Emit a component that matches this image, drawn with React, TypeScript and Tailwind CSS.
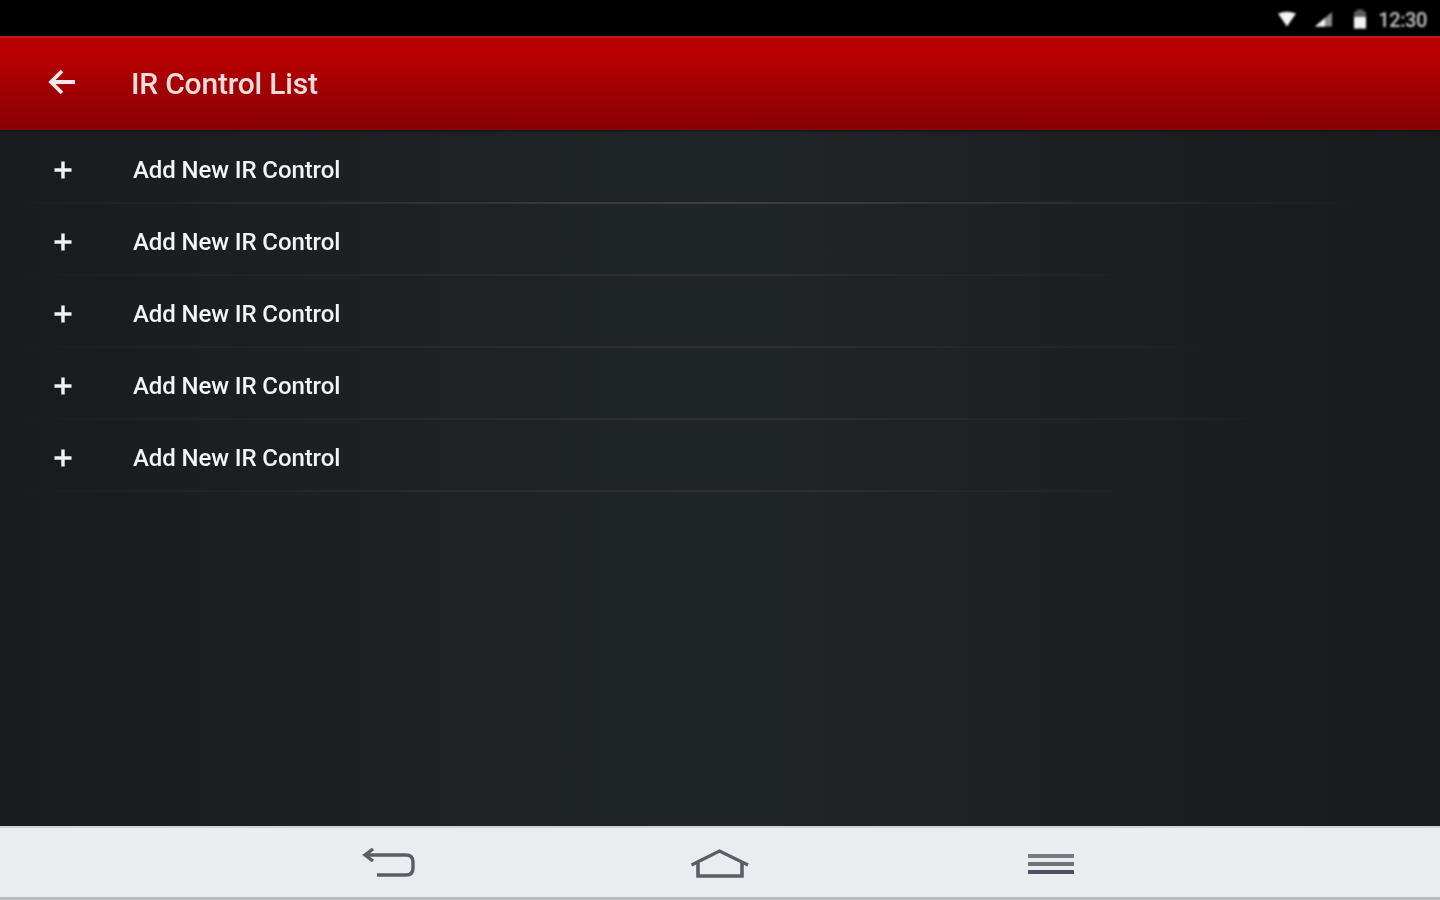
const rows = [
  "via-[#3c3f41] to-95%",
  "via-[#2d3032] to-80%",
  "via-[#2d3032] to-85%",
  "via-[#2d3032] to-90%",
  "via-[#2f3234] to-80%",
];

function Plus() {
  return (
    <svg width="20" height="20" viewBox="0 0 20 20" className="blur-[0.6px]">
      <path d="M10 1.5v17M1.5 10h17" stroke="#f2f2f2" strokeWidth="3.4" fill="none" />
    </svg>
  );
}

export default function App() {
  return (
    <div className="w-[1440px] h-[900px] overflow-hidden flex flex-col font-['Roboto',sans-serif] bg-black">
      <div className="h-[36px] shrink-0 bg-black flex items-center justify-end pr-[13px] text-[#c4c4c4] blur-[0.8px]">
        <svg width="20" height="16" viewBox="0 0 20 16" className="mr-[17px] mt-[2px]">
          <path d="M1 2.5 Q10 -1 19 2.5 L10 15.5 Z" fill="#f4f4f4" />
        </svg>
        <svg width="19" height="16" viewBox="0 0 19 16" className="mr-[20px] mt-[2px]">
          <path d="M1 15.5 L18 1 V15.5 Z" fill="#8c8c8c" />
          <path d="M1 15.5 L11 7 V15.5 Z" fill="#f0f0f0" />
        </svg>
        <svg width="14" height="20" viewBox="0 0 14 20" className="mr-[11px] mt-[1px]">
          <path d="M4 0.5h6v2h3v17H1v-17h3z" fill="#5e5e5e" />
          <path d="M1 8h12v11.5H1z" fill="#f2f2f2" />
        </svg>
        <span className="text-[20px] leading-none tracking-[-0.4px] font-medium mt-[3px]">12:30</span>
      </div>

      <header className="h-[94px] shrink-0 flex items-center bg-gradient-to-b from-[#b80000] from-20% to-[#870003] border-t-2 border-[#c21a1a] shadow-[0_1px_2px_#111] z-10">
        <div className="w-[131px] shrink-0 pl-[47px] -mt-[5px] blur-[0.5px]">
          <svg width="30" height="28" viewBox="0 0 30 28">
            <path d="M28 14H5M15 3 4 14 15 25" stroke="#f6e8e8" strokeWidth="3.8" fill="none" />
          </svg>
        </div>
        <h1 className="text-[30px] leading-none font-medium text-[#f0dcdc] tracking-[-0.2px] -mt-[1px] blur-[0.6px]">IR Control List</h1>
      </header>

      <main className="flex-1 pt-[2px] bg-gradient-to-r from-[#181c1f] via-[#202528] to-[#181b1e]">
        {rows.map((via, i) => (
          <div key={i} className="h-[72px] flex flex-col">
            <div className="flex-1 flex items-center pt-[5px]">
              <div className="w-[133px] shrink-0 pl-[53px]">
                <Plus />
              </div>
              <span className="text-[24px] leading-none font-medium text-[#f4f4f4] tracking-[-0.1px] blur-[0.6px]">Add New IR Control</span>
            </div>
            <div className={`h-[2px] bg-gradient-to-r from-transparent ${via} to-transparent`} />
          </div>
        ))}
      </main>

      <nav className="h-[74px] shrink-0 flex flex-col bg-[#e9edf0]">
        <div className="h-[2px] bg-[#cfd3d6]" />
        <div className="flex-1 relative flex items-center pt-[2px] blur-[0.7px]">
          <div className="w-[362px] shrink-0" />
          <svg width="54" height="32" viewBox="0 0 54 32" className="shrink-0">
            <path d="M5 7H44Q51 7 51 14V20Q51 27 44 27H15" stroke="#5a5d66" strokeWidth="3.4" fill="none" />
            <path d="M11 1 3 7 11 13" stroke="#5a5d66" strokeWidth="3.4" fill="none" />
          </svg>
          <div className="w-[274px] shrink-0" />
          <svg width="60" height="30" viewBox="0 0 60 30" className="shrink-0">
            <path d="M1.5 16 29.5 2 58 16" stroke="#5a5d66" strokeWidth="3.2" fill="none" />
            <path d="M8 14V27H52V14" stroke="#5a5d66" strokeWidth="3.6" fill="none" />
          </svg>
          <div className="w-[278px] shrink-0" />
          <div className="w-[46px] shrink-0 flex flex-col gap-[4px]">
            <div className="h-[4px] bg-[#777a80]" />
            <div className="h-[4px] bg-[#6f7278]" />
            <div className="h-[4px] bg-[#4e5068]" />
          </div>
        </div>
        <div className="h-[3px] bg-[#b9bcbe]" />
      </nav>
    </div>
  );
}
